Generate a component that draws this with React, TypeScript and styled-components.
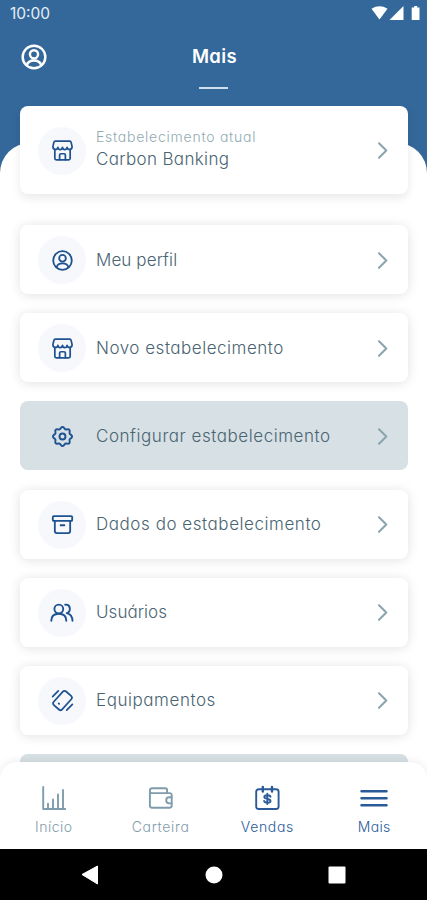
import React from "react";
import styled, { createGlobalStyle } from "styled-components";

const Global = createGlobalStyle`
  * { box-sizing: border-box; }
  html, body { margin: 0; padding: 0; background: #fff; }
  body {
    font-family: Inter, "Open Sans", sans-serif;
    font-feature-settings: "cv11" 1;
  }
`;

const blue = "#1f5291";

const Screen = styled.div`
  display: flex;
  flex-direction: column;
  width: 427px;
  height: 900px;
  overflow: hidden;
  background: #fff;
`;

const Header = styled.header`
  flex: none;
  height: 173px;
  background: #34689a;
  color: #fff;
`;

const StatusBar = styled.div`
  display: flex;
  align-items: center;
  justify-content: space-between;
  height: 28px;
  padding: 0 6px 0 10px;
`;

const Clock = styled.span`
  font-size: 15.5px;
  line-height: 20px;
  color: #e6eef7;
`;

const StatusIcons = styled.svg`
  display: block;
  width: 50px;
  height: 16px;
  margin-top: -2px;
`;

const TitleBar = styled.div`
  display: grid;
  grid-template-columns: 60px 1fr 60px;
  align-items: center;
  height: 58px;
`;

const ProfileButton = styled.button`
  display: flex;
  margin: 0 0 0 20px;
  padding: 0;
  border: 0;
  background: none;
  color: #fff;
`;

const Title = styled.h1`
  margin: 0;
  padding: 0 0 3px 2px;
  text-align: center;
  font-size: 18.5px;
  line-height: 24px;
  font-weight: 600;
  letter-spacing: 0.4px;
`;

const TitleMark = styled.div`
  width: 29px;
  height: 2px;
  margin: 1px auto 0;
  background: #cfdfee;
`;

const Sheet = styled.main`
  flex: 1;
  min-height: 0;
  margin-top: -30px;
  padding: 0 19px 0 19.5px;
  border-radius: 30px 30px 0 0;
  background: #fff;
`;

const Card = styled.div<{ $current?: boolean; $active?: boolean }>`
  display: flex;
  align-items: center;
  height: ${(p) => (p.$current ? 88 : 69)}px;
  padding: 0 13px 0 18.5px;
  border-radius: 8px;
  background: ${(p) => (p.$active ? "#d7e0e4" : "#fff")};
  box-shadow: ${(p) => (p.$active ? "none" : "0 1px 12px rgba(0, 0, 0, 0.12)")};
  ${(p) => p.$current && "position: relative; margin-top: -37px; box-shadow: 0 4px 10px rgba(0, 0, 0, 0.09);"}
`;

const List = styled.div`
  display: flex;
  flex-direction: column;
  gap: 19.2px;
  margin-top: 31px;
`;

const Bubble = styled.div<{ $plain?: boolean }>`
  display: flex;
  flex: none;
  align-items: center;
  justify-content: center;
  width: 48px;
  height: 48px;
  margin-top: 1px;
  border-radius: 50%;
  background: ${(p) => (p.$plain ? "transparent" : "#f6f8fc")};
  color: ${blue};
`;

const Texts = styled.div`
  flex: 1;
  padding: 1px 0 0 10px;
  white-space: nowrap;
`;

const Caption = styled.div`
  margin-top: -3px;
  font-size: 14px;
  line-height: 20px;
  font-weight: 300;
  letter-spacing: 0.75px;
  color: #91aab2;
`;

const Label = styled.div<{ $spacing: number }>`
  font-size: 17px;
  line-height: 25px;
  font-weight: 300;
  letter-spacing: ${(p) => p.$spacing}px;
  color: #4a6472;
`;

const TabBar = styled.nav`
  position: relative;
  display: grid;
  flex: none;
  grid-template-columns: repeat(4, 1fr);
  height: 87px;
  border-radius: 17px 17px 0 0;
  background: #fff;
  box-shadow: 0 -1px 8px rgba(0, 0, 0, 0.08);
`;

const Tab = styled.div<{ $active?: boolean }>`
  display: flex;
  flex-direction: column;
  align-items: center;
  padding: 22px 0 0 1px;
  color: ${(p) => (p.$active ? "#2a5b98" : "#7f9cac")};
`;

const TabLabel = styled.span<{ $spacing: number }>`
  margin-top: 5px;
  font-size: 14px;
  line-height: 20px;
  font-weight: 300;
  letter-spacing: ${(p) => p.$spacing}px;
`;

const SystemBar = styled.footer`
  display: flex;
  flex: none;
  align-items: center;
  justify-content: space-between;
  height: 51px;
  padding: 0 81px 0 81px;
  background: #000;
  color: #fff;
`;

const Stroke = styled.svg<{ $size: number }>`
  display: block;
  flex: none;
  width: ${(p) => p.$size}px;
  height: ${(p) => p.$size}px;
  fill: none;
  stroke: currentColor;
  stroke-linecap: round;
  stroke-linejoin: round;
`;

const UserIcon = ({ size = 23, weight = 1.9 }: { size?: number; weight?: number }) => (
  <Stroke $size={size} viewBox="0 0 24 24" strokeWidth={weight}>
    <circle cx="12" cy="12" r="9.7" />
    <circle cx="12" cy="9.700" r="3.500" />
    <path d="M5.800 19c.8-2.600 3.200-4 6.200-4s5.400 1.400 6.200 4" />
  </Stroke>
);

const StoreIcon = () => (
  <Stroke $size={23} viewBox="0 0 24 24" strokeWidth="1.8">
    <path d="M4.500 2.300h15q1.200 0 1.500 1.200l1 4.500c0 3.600-4.900 3.900-5.200.8-.5 3.100-4.400 3.100-4.800 0-.4 3.100-4.300 3.100-4.800 0-.3 3.100-5.200 2.800-5.200-.8l1-4.500q.3-1.200 1.500-1.200z" />
    <path d="M4 11.500v8.700q0 1.500 1.500 1.500h13q1.500 0 1.500-1.500v-8.700" />
    <path d="M9 21.500v-4.700q0-1.400 1.400-1.400h3.200q1.400 0 1.400 1.400v4.700" />
  </Stroke>
);

const gearPath = (() => {
  const points: string[] = [];
  for (let i = 0; i <= 96; i++) {
    const a = (i / 96) * Math.PI * 2;
    const r = 9 + 0.95 * Math.cos(a * 8);
    points.push(`${(12 + r * Math.sin(a)).toFixed(2)} ${(12 - r * Math.cos(a)).toFixed(2)}`);
  }
  return `M${points.join("L")}z`;
})();

const GearIcon = () => (
  <Stroke $size={23} viewBox="0 0 24 24" strokeWidth="2">
    <path d={gearPath} />
    <circle cx="12" cy="12" r="3.1" />
  </Stroke>
);

const ArchiveIcon = () => (
  <Stroke $size={23} viewBox="0 0 24 24" strokeWidth="1.9">
    <rect x="1.900" y="3.200" width="20.200" height="5" rx="1" />
    <path d="M4 8.400v10.500q0 2.100 2.100 2.100h11.800q2.100 0 2.100-2.100V8.400M10 12.800h4" />
  </Stroke>
);

const UsersIcon = () => (
  <Stroke $size={24} viewBox="0 0 24 24" strokeWidth="1.9">
    <circle cx="8.800" cy="8" r="4.400" />
    <path d="M1.300 19.800c0-4.500 2.900-7 7.500-7s7.500 2.500 7.500 7" />
    <path d="M15.200 3.700c5.500-.7 6.200 6.800 1.600 8.400 3.600.8 5.500 3.300 5.700 7.700" />
  </Stroke>
);

const DeviceIcon = () => (
  <Stroke $size={23} viewBox="0 0 24 24" strokeWidth="1.8">
    <rect x="6.100" y="2.500" width="11.800" height="19" rx="2.400" transform="rotate(42 12 12)" />
    <path d="M1.700 7.900l5.900-5.900M16.400 22l5.900-5.900" />
    <path d="M8 15l.5.500" />
  </Stroke>
);

const Chevron = () => (
  <Stroke $size={24} viewBox="0 0 24 24" color="#8ba5af" strokeWidth="2.1">
    <path d="M8 5.300l7.300 7.200L8 19.700" />
  </Stroke>
);

const ChartIcon = () => (
  <Stroke $size={28} viewBox="0 0 28 28" strokeWidth="1.900">
    <path d="M3.200 3v22h22M8 24.500v-4.700M13 24.500V15.500M18 24.500V10.500M23 24.500V6" />
  </Stroke>
);

const WalletIcon = () => (
  <Stroke $size={28} viewBox="0 0 28 28" strokeWidth="1.900">
    <path d="M2.900 6.600v15q0 2.200 2.200 2.200h17.400q2.200 0 2.200-2.200V11.300q0-2.200-2.200-2.200H5.100c-3 0-3-4.900 0-4.900h13.100q1.900 0 1.900 1.900v2.900" />
    <path d="M24.500 13.200h-2.200a3.100 3.100 0 0 0 0 6.200h2.200" />
  </Stroke>
);

const SalesIcon = () => (
  <Stroke $size={28} viewBox="0 0 28 28" strokeWidth="1.900">
    <rect x="3.200" y="5.300" width="22.400" height="19.700" rx="2.500" />
    <path d="M9.800 3v4.500M19 3v4.500" strokeWidth="2.400" />
    <path d="M17.500 12.800c-.4-2-6.200-2.100-6.200.3 0 2.600 6.200 1.100 6.200 3.800 0 2.400-5.800 2.400-6.400.1M14.300 9.800v10.300" />
  </Stroke>
);

const MenuIcon = () => (
  <Stroke $size={28} viewBox="0 0 28 28" strokeWidth="2.500">
    <path d="M1.500 7.200h25M1.500 14.200h25M1.500 21.200h25" />
  </Stroke>
);

const rows = [
  { label: "Meu perfil", icon: <UserIcon />, spacing: 0.1 },
  { label: "Novo estabelecimento", icon: <StoreIcon />, spacing: 0.52 },
  { label: "Configurar estabelecimento", icon: <GearIcon />, spacing: 0.55, active: true },
  { label: "Dados do estabelecimento", icon: <ArchiveIcon />, spacing: 0.55 },
  { label: "Usuários", icon: <UsersIcon />, spacing: 0.05 },
  { label: "Equipamentos", icon: <DeviceIcon />, spacing: 0.55 },
];

const tabs = [
  { label: "Início", icon: <ChartIcon />, spacing: 0.5 },
  { label: "Carteira", icon: <WalletIcon />, spacing: 0.65 },
  { label: "Vendas", icon: <SalesIcon />, spacing: 0.65, active: true },
  { label: "Mais", icon: <MenuIcon />, spacing: 0.3, active: true },
];

export default function App() {
  return (
    <>
      <Global />
      <Screen>
        <Header>
          <StatusBar>
            <Clock>10:00</Clock>
            <StatusIcons viewBox="0 0 50 16" fill="#fff">
              <path d="M0.500 3.700Q8.500 -1 16.500 3.700L8.500 14.500z" />
              <path d="M32.500 1v14H18.500z" />
              <path d="M43.200 1h3v1.500h2.300V15h-7.800V2.500h2.500z" />
            </StatusIcons>
          </StatusBar>
          <TitleBar>
            <ProfileButton aria-label="Perfil">
              <UserIcon size={28} weight={2.1} />
            </ProfileButton>
            <Title>Mais</Title>
          </TitleBar>
          <TitleMark />
        </Header>
        <Sheet>
          <Card $current>
            <Bubble>
              <StoreIcon />
            </Bubble>
            <Texts>
              <Caption>Estabelecimento atual</Caption>
              <Label $spacing={0.35}>Carbon Banking</Label>
            </Texts>
            <Chevron />
          </Card>
          <List>
            {rows.map((row) => (
              <Card key={row.label} $active={row.active}>
                <Bubble $plain={row.active}>{row.icon}</Bubble>
                <Texts>
                  <Label $spacing={row.spacing}>{row.label}</Label>
                </Texts>
                <Chevron />
              </Card>
            ))}
            <Card $active />
          </List>
        </Sheet>
        <TabBar>
          {tabs.map((tab) => (
            <Tab key={tab.label} $active={tab.active}>
              {tab.icon}
              <TabLabel $spacing={tab.spacing}>{tab.label}</TabLabel>
            </Tab>
          ))}
        </TabBar>
        <SystemBar>
          <svg width="18" height="20" viewBox="0 0 18 20" fill="currentColor">
            <path d="M1 9.500L16.500 1v18z" stroke="currentColor" strokeLinejoin="round" />
          </svg>
          <svg width="18" height="18" viewBox="0 0 18 18" fill="currentColor">
            <circle cx="9" cy="9" r="8.500" />
          </svg>
          <svg width="18" height="18" viewBox="0 0 18 18" fill="currentColor">
            <rect x=".5" y=".5" width="17" height="17" rx="1" />
          </svg>
        </SystemBar>
      </Screen>
    </>
  );
}
